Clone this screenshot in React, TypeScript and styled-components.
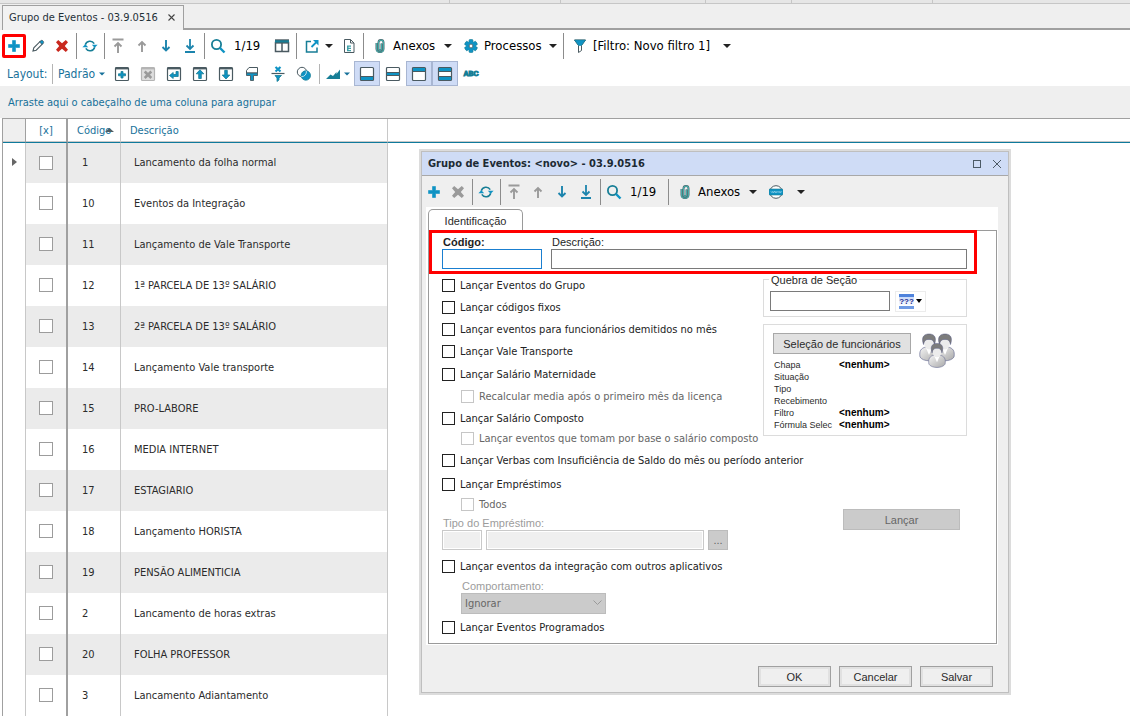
import React, { useState } from "react";
import styled, { createGlobalStyle, css } from "styled-components";

const UI = `"DejaVu Sans Condensed", "DejaVu Sans", Tahoma, sans-serif`;
const SANS = `"Liberation Sans", Arial, sans-serif`;

const BLUE = "#0f93c4";
const TEAL = "#177e96";
const SLATE = "#4a5a61";
const GREY = "#9a9a9a";

const Global = createGlobalStyle`
  *, *::before, *::after { box-sizing: border-box; }
  body { margin: 0; background: #fff; font-family: ${UI}; font-size: 11px; color: #2b2b2b; }
  button, input, select { font: inherit; color: inherit; margin: 0; }
  button { cursor: pointer; }
  svg { flex: none; }
`;

/* ---------- page frame ---------- */

const Page = styled.div`
  display: flex;
  flex-direction: column;
  height: 100vh;
  overflow: hidden;
  position: relative;
`;

const StatusStrip = styled.div`
  display: flex;
  flex: none;
  height: 4px;
  background: #e6e6e6;
  border-bottom: 1px solid #c6c6c6;
`;

const StripCell = styled.span<{ $w: number }>`
  width: ${(p) => p.$w}px;
  border-right: 1px solid #c6c6c6;
`;

const TabBar = styled.div`
  display: flex;
  flex: none;
  height: 26px;
  padding: 1px 0 0 2px;
  background: #efefef;
`;

const DocTab = styled.div`
  display: flex;
  align-items: center;
  justify-content: space-between;
  width: 182px;
  height: 25px;
  padding: 0 8px 2px 6px;
  background: #f2f2f2;
  border: 1px solid #a0a0a0;
  border-bottom: 0;
  color: #1f3038;
  white-space: nowrap;
`;

const TabRule = styled.div`
  flex: 1;
  border-bottom: 2px solid #a0a0a0;
`;

const PlainButton = styled.button`
  display: inline-flex;
  align-items: center;
  justify-content: center;
  padding: 0;
  border: 0;
  background: none;
`;

/* ---------- toolbars ---------- */

const Toolbar = styled.div<{ $h: number }>`
  display: flex;
  flex: none;
  align-items: center;
  height: ${(p) => p.$h}px;
  padding-left: 2px;
`;

const DialogToolbar = styled(Toolbar)`
  padding-left: 0;
`;

const ToolButton = styled(PlainButton)<{ $mark?: boolean }>`
  width: 24px;
  height: 24px;
  flex: none;
  ${(p) =>
    p.$mark &&
    css`
      border: 3px solid #f00;
      border-radius: 2px;
      outline: 0;
    `}
`;

const Separator = styled.span<{ $light?: boolean }>`
  flex: none;
  width: 1px;
  height: ${(p) => (p.$light ? 20 : 26)}px;
  margin: 0 1px 0 2px;
  background: ${(p) => (p.$light ? "#b4b4b4" : "#8c8c8c")};
`;

const MenuButton = styled(PlainButton)<{ $w: number; $tight?: boolean }>`
  flex: none;
  width: ${(p) => p.$w}px;
  height: 24px;
  padding: 0 4px 0 ${(p) => (p.$tight ? 6 : 8)}px;
  justify-content: flex-start;
  gap: ${(p) => (p.$tight ? 4 : 6)}px;
  font-size: 13px;
  color: #000;
  white-space: nowrap;
`;

const Counter = styled.span`
  flex: none;
  width: 40px;
  padding-left: 4px;
  font-size: 13px;
  color: #000;
`;

const LayoutLabel = styled.span`
  flex: none;
  width: 48px;
  padding-left: 5px;
  font-size: 12px;
  color: #17719a;
  white-space: nowrap;
`;

const LayoutMenu = styled(PlainButton)<{ $w: number }>`
  flex: none;
  width: ${(p) => p.$w}px;
  height: 24px;
  padding: 0 4px;
  justify-content: space-between;
  font-size: 12px;
  color: #17719a;
`;

const LayoutButton = styled(PlainButton)<{ $on?: boolean }>`
  flex: none;
  width: 26px;
  height: 25px;
  border: 1px solid ${(p) => (p.$on ? "#a8b6d2" : "transparent")};
  background: ${(p) => (p.$on ? "#cfdcf6" : "transparent")};
`;

const CaretSvg = styled.svg`
  margin-left: auto;
`;

/* ---------- grid ---------- */

const GroupPanel = styled.div`
  flex: none;
  height: 32px;
  padding-left: 8px;
  line-height: 34px;
  background: #efefef;
  color: #17719a;
`;

const GridFrame = styled.div`
  flex: 1;
  min-height: 0;
  overflow: hidden;
  margin-left: 2px;
  border-left: 1px solid #a0a0a0;
  border-top: 1px solid #a0a0a0;
`;

const Table = styled.table`
  width: 100%;
  table-layout: fixed;
  border-collapse: separate;
  border-spacing: 0;
`;

const HeadCell = styled.th<{ $gutter?: boolean; $thick?: boolean; $last?: boolean; $pad?: number }>`
  height: 24px;
  padding: 0 0 0 ${(p) => p.$pad ?? 0}px;
  text-align: ${(p) => (p.$pad ? "left" : "center")};
  font-weight: normal;
  color: #17719a;
  background: ${(p) => (p.$gutter ? "#efefef" : "#fff")};
  border-bottom: 1px solid #0f7a9c;
  border-right: ${(p) =>
    p.$last ? "0" : p.$thick ? "2px solid #a0a0a0" : p.$gutter ? "1px solid #a0a0a0" : "1px solid #c8c8c8"};
  box-shadow: inset 0 -1px 0 #c8c8c8;
  white-space: nowrap;
`;

const SortMark = styled.svg`
  margin-left: -6px;
  vertical-align: 1px;
`;

const BodyCell = styled.td<{ $shade?: boolean; $thick?: boolean; $last?: boolean; $pad?: number }>`
  height: 41px;
  padding: 0 0 1px ${(p) => p.$pad ?? 0}px;
  text-align: ${(p) => (p.$pad ? "left" : "center")};
  vertical-align: middle;
  background: ${(p) => (p.$shade ? "#ebebeb" : "#fff")};
  border-right: ${(p) => (p.$last ? "0" : p.$thick ? "2px solid #a0a0a0" : "1px solid #c8c8c8")};
  white-space: nowrap;
  tr:first-child > & { height: 40px; }
`;

const GridCheck = styled.input`
  appearance: none;
  display: block;
  width: 14px;
  height: 14px;
  margin: 0 auto;
  background: #fff;
  border: 1px solid #9c9c9c;
  &:checked { background: ${BLUE}; }
`;

/* ---------- dialog ---------- */

const DialogFrame = styled.section`
  position: absolute;
  left: 419px;
  top: 149px;
  width: 592px;
  border: 2px solid #dcdcdc;
`;

const DialogBody = styled.div`
  display: flex;
  flex-direction: column;
  border: 1px solid #bfbfbf;
  background: #efefef;
`;

const TitleBar = styled.header`
  display: flex;
  align-items: center;
  height: 24px;
  padding: 0 1px 0 6px;
  background: #cfdcf6;
  border-bottom: 1px solid #a8a8a8;
`;

const Title = styled.h1`
  flex: 1;
  margin: 0;
  font-size: 11px;
  font-weight: bold;
  color: #1c2a33;
`;

const WindowButton = styled(PlainButton)`
  width: 20px;
  height: 20px;
`;

const TabPage = styled.div`
  margin: 0 10px 0 4px;
  padding: 2px 1px 1px 2px;
  background: #fff;
`;

const PageTab = styled.button`
  display: block;
  position: relative;
  width: 95px;
  height: 22px;
  margin-bottom: -1px;
  padding: 0;
  border: 1px solid #9a9a9a;
  border-bottom: 0;
  border-radius: 5px 5px 0 0;
  background: #fff;
  font-family: ${SANS};
`;

const Panel = styled.form`
  border: 1px solid #9a9a9a;
  min-height: 414px;
  font-family: ${SANS};
`;

const KeyFields = styled.div`
  display: flex;
  position: relative;
  gap: 9px;
  margin: -1px 19px 0 0;
  height: 44px;
  padding: 2px 7px 2px 10px;
  border: 3px solid #f00;
`;

const Field = styled.div<{ $w?: number }>`
  display: flex;
  flex-direction: column;
  ${(p) => (p.$w ? `width: ${p.$w}px; flex: none;` : "flex: 1;")}
`;

const FieldLabel = styled.label<{ $bold?: boolean; $off?: boolean }>`
  height: 14px;
  line-height: 14px;
  padding-left: 1px;
  font-family: ${SANS};
  font-size: 11px;
  font-weight: ${(p) => (p.$bold ? "bold" : "normal")};
  color: ${(p) => (p.$off ? "#9c9c9c" : "#1e1e1e")};
`;

const TextBox = styled.input<{ $w?: number }>`
  width: ${(p) => (p.$w ? `${p.$w}px` : "100%")};
  height: 20px;
  padding: 0 3px;
  border: 1px solid #7a7a7a;
  border-radius: 0;
  background: #fff;
  outline: 0;
  &.key { border-color: #1a7fd0; }
  &:disabled { border-color: #c9c9c9; background: #efefef; box-shadow: inset 0 0 0 1px #fff; }
`;

const Columns = styled.div`
  display: flex;
  justify-content: space-between;
  align-items: flex-start;
  padding: 1px 29px 0 13px;
`;

const Options = styled.div`
  flex: 1;
  min-width: 0;
  font-family: ${UI};
`;

const OptionGroup = styled.div<{ $top?: number }>`
  padding-top: ${(p) => p.$top ?? 0}px;
`;

const OptionRow = styled.div<{ $h?: number; $sub?: boolean }>`
  display: flex;
  gap: 5px;
  height: ${(p) => p.$h ?? 22}px;
  padding: 4px 0 0 ${(p) => (p.$sub ? 19 : 0)}px;
  line-height: 14px;
  white-space: nowrap;
  color: ${(p) => (p.$sub ? "#666" : "#222")};
`;

const OptionCheck = styled.input`
  appearance: none;
  flex: none;
  width: 13px;
  height: 13px;
  background: #fff;
  border: 1px solid #222;
  &:disabled { border-color: #c6c6c6; }
  &:checked { background: ${BLUE}; }
`;

const InlineFields = styled.div`
  display: flex;
  gap: 4px;
`;

const Indented = styled.div`
  display: flex;
  flex-direction: column;
  padding: 1px 0 3px 19px;
`;

const SelectWrap = styled.div`
  position: relative;
  width: 145px;
  height: 21px;
`;

const Combo = styled.select`
  appearance: none;
  width: 100%;
  height: 100%;
  padding: 0 3px;
  border: 1px solid #bcbcbc;
  border-radius: 0;
  background: #cbcbcb;
  color: #666;
  opacity: 1;
`;

const Chevron = styled.svg`
  position: absolute;
  right: 4px;
  top: 7px;
  pointer-events: none;
`;

const Side = styled.div`
  width: 204px;
  flex: none;
  padding-top: 4px;
`;

const Fieldset = styled.fieldset`
  display: flex;
  align-items: center;
  position: relative;
  gap: 5px;
  height: 38px;
  min-width: 0;
  margin: 0;
  padding: 6px 6px 0;
  border: 1px solid #dcdcdc;
`;

const FieldsetTitle = styled.legend`
  position: absolute;
  left: 5px;
  top: -6px;
  padding: 0 2px;
  line-height: 12px;
  background: #fff;
  font-size: 11px;
`;

const MaskButton = styled(PlainButton)`
  width: 31px;
  height: 21px;
  gap: 2px;
  border: 1px solid #ececec;
`;

const MaskGlyph = styled.span`
  width: 15px;
  height: 15px;
  line-height: 10px;
  border-top: 3px solid #4f83dc;
  border-bottom: 3px solid #6f9ae4;
  background: linear-gradient(#c9dafa, #fff);
  font-size: 8px;
  font-weight: bold;
  color: #232c8c;
  text-align: center;
`;

const SelectionBox = styled.div`
  height: 112px;
  margin-top: 7px;
  padding: 8px 9px;
  border: 1px solid #dcdcdc;
`;

const SelectionHead = styled.div`
  display: flex;
  align-items: flex-start;
  gap: 8px;
  height: 26px;
`;

const FlatButton = styled.button<{ $w: number }>`
  width: ${(p) => p.$w}px;
  height: 21px;
  padding: 0;
  border: 1px solid #a8a8a8;
  border-radius: 0;
  background: #e1e1e1;
  font-family: ${SANS};
  font-size: 11px;
  white-space: nowrap;
  &:disabled { border-color: #bcbcbc; background: #cbcbcb; color: #666; }
`;

const BrowseButton = styled(FlatButton)`
  height: 20px;
`;

const Facts = styled.dl`
  display: grid;
  grid-template-columns: 65px 1fr;
  grid-auto-rows: 12px;
  margin: 0;
  padding-left: 1px;
  font-size: 9px;
  line-height: 12px;
  white-space: nowrap;
`;

const FactValue = styled.dd`
  margin: 0;
  font-size: 10px;
  font-weight: bold;
  color: #000;
`;

const RunRow = styled.div`
  display: flex;
  justify-content: flex-end;
  margin-top: 73px;
  padding-right: 7px;
`;

const Footer = styled.footer`
  display: flex;
  justify-content: flex-end;
  gap: 8px;
  padding: 21px 15px 5px;
`;

const FooterButton = styled.button`
  width: 73px;
  height: 21px;
  padding: 0;
  border: 1px solid #a0a0a0;
  border-radius: 0;
  background: #efefef;
  box-shadow: inset 0 0 0 2px #e1e1e1;
  font-family: ${SANS};
  font-size: 11px;
`;

/* ---------- icons ---------- */

const Svg = ({ s = 16, children }: { s?: number; children: React.ReactNode }) => (
  <svg width={s} height={s} viewBox={`0 0 ${s} ${s}`} fill="none" aria-hidden="true">
    {children}
  </svg>
);

const Caret = ({ color = "#222", small }: { color?: string; small?: boolean }) => (
  <CaretSvg width={small ? 6 : 8} height="4" viewBox="0 0 8 4" aria-hidden="true">
    <path d="M0 0h8L4 4z" fill={color} />
  </CaretSvg>
);

const PlusIcon = () => (
  <Svg><path d="M6.5 2.5h3v4h4v3h-4v4h-3v-4h-4v-3h4z" fill={BLUE} stroke={BLUE} strokeWidth=".6" /></Svg>
);
const PencilIcon = () => (
  <Svg>
    <path d="M3 13l.8-3.2 6.6-6.6 2.4 2.4-6.6 6.600z" stroke={SLATE} strokeWidth="1.1" fill="#fff" />
    <path d="M9.600 4l1.200-1.200c.6-.6 1.500-.6 2 0l.4.4c.6.6.6 1.400 0 2L12 6.400z" fill={BLUE} stroke={SLATE} strokeWidth=".8" />
  </Svg>
);
const CrossIcon = ({ color = "#c9281e" }: { color?: string }) => (
  <Svg><path d="M2 4.200L4.200 2 8 5.200 11.800 2 14 4.200 10.800 8l3.200 3.800-2.200 2.200L8 10.800 4.200 14 2 11.800 5.200 8z" fill={color} /></Svg>
);
const RefreshIcon = () => (
  <Svg>
    <path d="M3.300 6.800A4.900 4.900 0 0 1 12.200 5.600" stroke={TEAL} strokeWidth="1.600" />
    <path d="M12.700 9.200A4.900 4.900 0 0 1 3.800 10.400" stroke={TEAL} strokeWidth="1.600" />
    <path d="M9.800 6.800h5.800l-2.900 3z" fill={BLUE} />
    <path d="M.4 9.200h5.800l-2.900-3z" fill={BLUE} />
  </Svg>
);
const TopIcon = () => (
  <Svg>
    <path d="M2.500 1.500h11M8 15V5M4.500 8.500L8 5l3.500 3.500" stroke={GREY} strokeWidth="1.900" />
  </Svg>
);
const UpIcon = () => (
  <Svg><path d="M8 14V4M4.500 7.500L8 4l3.500 3.500" stroke={GREY} strokeWidth="1.900" /></Svg>
);
const DownIcon = () => (
  <Svg><path d="M8 2v10.500M4.500 9L8 12.500 11.500 9" stroke="#1c84ad" strokeWidth="1.900" /></Svg>
);
const BottomIcon = () => (
  <Svg><path d="M8 1v10M4.500 7.500L8 11l3.500-3.500M3 14h10" stroke="#1c84ad" strokeWidth="1.800" /></Svg>
);
const SearchIcon = () => (
  <Svg>
    <circle cx="6.500" cy="6.500" r="4.600" stroke={TEAL} strokeWidth="1.800" />
    <path d="M10 10l4.500 4.500" stroke={BLUE} strokeWidth="2.400" />
  </Svg>
);
const ColumnsIcon = () => (
  <Svg>
    <path d="M1.500 4.500h13v9h-13zM8 4.500v9" stroke={SLATE} strokeWidth="1.500" />
    <path d="M1 2h14v3H1z" fill={TEAL} />
    <path d="M1 1.800h14M1 5h14" stroke={SLATE} />
  </Svg>
);
const ExportIcon = () => (
  <Svg>
    <path d="M7 3.500H2.500v10.500h10.500V9.500" stroke={TEAL} strokeWidth="1.500" />
    <path d="M9 2h5.500v5.500z" fill={BLUE} />
    <path d="M7.500 9l5-5" stroke={BLUE} strokeWidth="1.800" />
  </Svg>
);
const DocIcon = () => (
  <Svg>
    <path d="M3.500 1.500h6l3.500 3.500v9.500H3.500z" stroke={SLATE} />
    <path d="M9.500 1.500V5H13" stroke={SLATE} />
    <path d="M6 7.500h4v1.300H7.500v1H10v1.200H7.500v1H10v1.300H6z" fill="#3fa0a8" />
  </Svg>
);
const ClipIcon = () => (
  <Svg s={14}>
    <path d="M3.500 4v6c0 4.200 7 4.200 7 0V3.500c0-3.300-5-3.300-5 0V10c0 1.800 3 1.800 3 0V4.500" stroke={SLATE} strokeWidth="1.900" />
    <path d="M3.500 4v6c0 4.200 7 4.200 7 0V3.500c0-3.300-5-3.300-5 0V10c0 1.800 3 1.800 3 0V4.500" stroke="#45aaa8" strokeWidth="1.200" />
  </Svg>
);
const GearIcon = () => (
  <Svg s={14}>
    {[0, 60, 120].map((a) => (
      <rect key={a} x="5" y=".5" width="4" height="13" rx="1" fill={BLUE} stroke={TEAL} strokeWidth=".6" transform={`rotate(${a} 7 7)`} />
    ))}
    <circle cx="7" cy="7" r="4.600" fill={BLUE} />
    <circle cx="7" cy="7" r="1.900" fill="#fff" stroke={SLATE} strokeWidth=".8" />
  </Svg>
);
const FunnelIcon = () => (
  <Svg s={14}>
    <path d="M1.500 1h11L8.500 6.500v5l-3 2v-7z" fill="#fff" stroke={SLATE} />
    <path d="M1.500 1h11L8.500 6.500h-3z" fill={BLUE} stroke={TEAL} strokeWidth=".6" />
  </Svg>
);
const WebIcon = () => (
  <Svg s={14}>
    <circle cx="7" cy="7" r="6.300" fill="#fff" stroke={SLATE} />
    <rect x="0" y="4" width="14" height="6" rx="1" fill={BLUE} stroke={TEAL} strokeWidth=".6" />
    <path d="M2 6.500l1 1 .8-1 .8 1 .9-1M5.500 6.500l.8 1 .7-1 .8 1 .9-1M9.300 6.500l.8 1 .8-1 .8 1 .9-1" stroke="#d8f1fa" strokeWidth=".7" />
  </Svg>
);

const Box = ({ color = SLATE, fill = "#fff" }: { color?: string; fill?: string }) => (
  <rect x="1.500" y="1.500" width="13" height="13" rx="1" stroke={color} strokeWidth="1.200" fill={fill} />
);
const Lid = ({ color = SLATE }: { color?: string }) => (
  <path d="M1.500 2.500h13" stroke={color} strokeWidth="1.800" />
);
const NewLayoutIcon = () => (
  <Svg><Box /><Lid /><path d="M7 5.500h2v2.300h2.500v2H9V12H7V9.800H4.500v-2H7z" fill={BLUE} stroke={TEAL} strokeWidth=".8" /></Svg>
);
const DelLayoutIcon = () => (
  <Svg><Box color="#b4b4b4" fill="#dedede" /><Lid color="#b4b4b4" /><path d="M4.700 5.500l6.600 6.500M11.300 5.500L4.700 12" stroke={GREY} strokeWidth="2.600" /></Svg>
);
const BackLayoutIcon = () => (
  <Svg><Box /><Lid /><path d="M3.500 9.500l3.700-3v2h2.800V5.500h2.200v5H7.200v2z" fill={BLUE} stroke={TEAL} strokeWidth=".8" /></Svg>
);
const UpLayoutIcon = () => (
  <Svg><Box /><Lid /><path d="M8 3.800l3.800 4H9.300v4.700H6.700V7.800H4.200z" fill={BLUE} stroke={TEAL} strokeWidth=".8" /></Svg>
);
const DownLayoutIcon = () => (
  <Svg><Box /><Lid /><path d="M8 13L4.200 9h2.500V4.300h2.600V9h2.500z" fill={BLUE} stroke={TEAL} strokeWidth=".8" /></Svg>
);
const BrushIcon = () => (
  <Svg>
    <path d="M2.500 7V4.500L5 1.500h8.500V7z" fill="#fff" stroke={SLATE} />
    <path d="M2.500 7h11v2.500H9.500v5h-3v-5h-4z" fill={BLUE} stroke={SLATE} strokeWidth=".9" />
  </Svg>
);
const ClearFormatIcon = () => (
  <Svg>
    <path d="M5.500 1l5 4.500M10.500 1l-5 4.500" stroke={BLUE} strokeWidth="2.200" />
    <path d="M1.500 7.500h13" stroke={SLATE} strokeWidth="1.200" />
    <path d="M5 9.500h6.500L9 12v2l-2 1.500V12z" fill={BLUE} stroke={TEAL} strokeWidth=".8" />
  </Svg>
);
const ShapesIcon = () => (
  <Svg>
    <circle cx="6" cy="6" r="4.700" fill="#fff" stroke={SLATE} />
    <circle cx="9.800" cy="9.500" r="4.700" fill={BLUE} stroke={TEAL} strokeWidth=".8" />
    <path d="M10.300 4.800A4.700 4.700 0 0 1 5.300 10.600" stroke="#cfe8ee" strokeWidth=".9" />
  </Svg>
);
const ChartIcon = () => (
  <Svg><path d="M1 13l4.500-4.500 2.500 1.500 3.500-4v2L15 3.500V13z" fill={TEAL} /></Svg>
);
const PanelBottomIcon = () => (
  <Svg><Box /><path d="M2 11h12v3H2z" fill={BLUE} /><path d="M2 10.500h12" stroke={SLATE} /></Svg>
);
const PanelMiddleIcon = () => (
  <Svg><Box /><path d="M2 6.500h12v3H2z" fill={BLUE} /><path d="M2 6.500h12M2 9.500h12" stroke={SLATE} /></Svg>
);
const PanelTopIcon = () => (
  <Svg><Box /><path d="M2 2h12v3H2z" fill={BLUE} /><path d="M2 5.500h12" stroke={SLATE} /></Svg>
);
const PanelBothIcon = () => (
  <Svg><Box /><path d="M2 2h12v3.500H2zM2 10.500h12V14H2z" fill={BLUE} /><path d="M2 5.500h12M2 10.500h12" stroke={SLATE} /></Svg>
);
const Abc = styled.span`
  font-family: ${SANS};
  font-size: 7px;
  font-weight: 900;
  color: ${TEAL};
  -webkit-text-stroke: 1px ${TEAL};
`;

const Person = ({ x, y, s = 1 }: { x: number; y: number; s?: number }) => (
  <g transform={`translate(${x} ${y}) scale(${s})`}>
    <path d="M-9 19c-1-6 1-9 6-10h6c5 1 7 4 6 10-3 5-15 5-18 0z" fill="url(#coat)" stroke="#6d7196" strokeWidth=".7" />
    <path d="M-3 10l3 7 3-7z" fill="#fff" />
    <ellipse cx="0" cy="5" rx="5" ry="6.500" fill="#ececec" />
    <path d="M-5.500 6.500C-8.500-2.500-3.500-4 0-4s8.500 1.500 5.500 10.500C5 3 3 1 0 1.500-3 1-5 3-5.500 6.500z" fill="#7c7c7c" stroke="#50547f" strokeWidth=".5" />
  </g>
);
const PeopleIcon = () => (
  <svg width="36" height="36" viewBox="0 0 36 36" aria-hidden="true">
    <defs>
      <linearGradient id="coat" x1="0" y1="0" x2="1" y2="1">
        <stop offset="0" stopColor="#f6f6f6" />
        <stop offset="1" stopColor="#a8a8a8" />
      </linearGradient>
    </defs>
    <Person x={10} y={5} />
    <Person x={26} y={5} />
    <Person x={18} y={14} s={0.9} />
  </svg>
);

/* ---------- data ---------- */

const rows: [string, string][] = [
  ["1", "Lancamento da folha normal"],
  ["10", "Eventos da Integração"],
  ["11", "Lançamento de Vale Transporte"],
  ["12", "1ª PARCELA DE 13º SALÁRIO"],
  ["13", "2ª PARCELA DE 13º SALÁRIO"],
  ["14", "Lançamento Vale transporte"],
  ["15", "PRO-LABORE"],
  ["16", "MEDIA INTERNET"],
  ["17", "ESTAGIARIO"],
  ["18", "Lançamento HORISTA"],
  ["19", "PENSÃO ALIMENTICIA"],
  ["2", "Lancamento de horas extras"],
  ["20", "FOLHA PROFESSOR"],
  ["3", "Lancamento Adiantamento"],
];

const facts: [string, string][] = [
  ["Chapa", "<nenhum>"],
  ["Situação", ""],
  ["Tipo", ""],
  ["Recebimento", ""],
  ["Filtro", "<nenhum>"],
  ["Fórmula Selec", "<nenhum>"],
];

/* ---------- parts ---------- */

const Option = ({ id, label, sub, h }: { id: string; label: string; sub?: boolean; h?: number }) => (
  <OptionRow $sub={sub} $h={h}>
    <OptionCheck type="checkbox" id={id} disabled={sub} />
    <label htmlFor={id}>{label}</label>
  </OptionRow>
);

const Navigation = () => (
  <>
    <Separator />
    <ToolButton aria-label="Atualizar"><RefreshIcon /></ToolButton>
    <Separator />
    <ToolButton aria-label="Primeiro"><TopIcon /></ToolButton>
    <ToolButton aria-label="Anterior"><UpIcon /></ToolButton>
    <ToolButton aria-label="Próximo"><DownIcon /></ToolButton>
    <ToolButton aria-label="Último"><BottomIcon /></ToolButton>
    <Separator />
    <ToolButton aria-label="Localizar"><SearchIcon /></ToolButton>
    <Counter>1/19</Counter>
  </>
);

const Grid = () => (
  <GridFrame>
    <Table>
      <colgroup>
        <col width="23" />
        <col width="42" />
        <col width="53" />
        <col width="267" />
        <col />
      </colgroup>
      <thead>
        <tr>
          <HeadCell $gutter />
          <HeadCell $thick>[x]</HeadCell>
          <HeadCell $pad={9}>
            Código
            <SortMark width="9" height="5" viewBox="0 0 9 5" aria-hidden="true">
              <path d="M4.500 0L9 4H0z" fill="#4f5e64" />
            </SortMark>
          </HeadCell>
          <HeadCell $pad={9}>Descrição</HeadCell>
          <HeadCell $last />
        </tr>
      </thead>
      <tbody>
        {rows.map(([code, name], i) => (
          <tr key={code}>
            <BodyCell>
              {i === 0 && (
                <svg width="5" height="8" viewBox="0 0 5 8" aria-hidden="true">
                  <path d="M0 0l5 4-5 4z" fill="#666" />
                </svg>
              )}
            </BodyCell>
            <BodyCell $shade={i % 2 === 0} $thick>
              <GridCheck type="checkbox" aria-label={`Selecionar ${name}`} />
            </BodyCell>
            <BodyCell $shade={i % 2 === 0} $pad={14}>{code}</BodyCell>
            <BodyCell $shade={i % 2 === 0} $pad={13}>{name}</BodyCell>
            <BodyCell $last />
          </tr>
        ))}
      </tbody>
    </Table>
  </GridFrame>
);

const EventDialog = () => {
  const [code, setCode] = useState("");
  const [desc, setDesc] = useState("");
  return (
    <DialogFrame role="dialog" aria-labelledby="dlg-title">
      <DialogBody>
        <TitleBar>
          <Title id="dlg-title">Grupo de Eventos: &lt;novo&gt; - 03.9.0516</Title>
          <WindowButton aria-label="Maximizar">
            <Svg s={10}><rect x="1.500" y="1.500" width="7" height="7" stroke="#4c5a66" /></Svg>
          </WindowButton>
          <WindowButton aria-label="Fechar">
            <Svg s={10}><path d="M1 1l8 8M9 1L1 9" stroke="#4c5a66" /></Svg>
          </WindowButton>
        </TitleBar>

        <DialogToolbar $h={31}>
          <ToolButton aria-label="Novo"><PlusIcon /></ToolButton>
          <ToolButton aria-label="Excluir" disabled><CrossIcon color={GREY} /></ToolButton>
          <Navigation />
          <Separator />
          <MenuButton $w={91}><ClipIcon />Anexos<Caret /></MenuButton>
          <MenuButton $w={48} aria-label="Web"><WebIcon /><Caret /></MenuButton>
        </DialogToolbar>

        <TabPage>
          <PageTab type="button">Identificação</PageTab>
          <Panel onSubmit={(e) => e.preventDefault()}>
            <KeyFields>
              <Field $w={100}>
                <FieldLabel htmlFor="codigo" $bold>Código:</FieldLabel>
                <TextBox id="codigo" className="key" value={code} onChange={(e) => setCode(e.target.value)} />
              </Field>
              <Field>
                <FieldLabel htmlFor="descricao">Descrição:</FieldLabel>
                <TextBox id="descricao" value={desc} onChange={(e) => setDesc(e.target.value)} />
              </Field>
            </KeyFields>

            <Columns>
              <Options>
                <OptionGroup>
                  <Option id="o1" label="Lançar Eventos do Grupo" />
                  <Option id="o2" label="Lançar códigos fixos" />
                  <Option id="o3" label="Lançar eventos para funcionários demitidos no mês" />
                  <Option id="o4" label="Lançar Vale Transporte" />
                </OptionGroup>
                <OptionGroup $top={1}>
                  <Option id="o5" label="Lançar Salário Maternidade" />
                  <Option id="o6" label="Recalcular media após o primeiro mês da licença" sub />
                </OptionGroup>
                <OptionGroup>
                  <Option id="o7" label="Lançar Salário Composto" h={20} />
                  <Option id="o8" label="Lançar eventos que tomam por base o salário composto" sub />
                </OptionGroup>
                <OptionGroup>
                  <Option id="o9" label="Lançar Verbas com Insuficiência de Saldo do mês ou período anterior" />
                </OptionGroup>
                <OptionGroup $top={2}>
                  <Option id="o10" label="Lançar Empréstimos" h={20} />
                  <Option id="o11" label="Todos" sub />
                </OptionGroup>
                <Field>
                  <FieldLabel htmlFor="tipo" $off>Tipo do Empréstimo:</FieldLabel>
                  <InlineFields>
                    <TextBox id="tipo" $w={40} disabled />
                    <TextBox aria-label="Descrição do tipo" $w={218} disabled />
                    <BrowseButton type="button" $w={20} disabled>...</BrowseButton>
                  </InlineFields>
                </Field>
                <OptionGroup $top={6}>
                  <Option id="o12" label="Lançar eventos da integração com outros aplicativos" />
                </OptionGroup>
                <Indented>
                  <FieldLabel htmlFor="comp" $off>Comportamento:</FieldLabel>
                  <SelectWrap>
                    <Combo id="comp" disabled defaultValue="Ignorar">
                      <option>Ignorar</option>
                    </Combo>
                    <Chevron width="9" height="6" viewBox="0 0 9 6" fill="none" aria-hidden="true">
                      <path d="M.5.5l4 4 4-4" stroke="#9a9a9a" />
                    </Chevron>
                  </SelectWrap>
                </Indented>
                <Option id="o13" label="Lançar Eventos Programados" />
              </Options>

              <Side>
                <Fieldset>
                  <FieldsetTitle>Quebra de Seção</FieldsetTitle>
                  <TextBox $w={120} aria-label="Quebra de Seção" />
                  <MaskButton type="button" aria-label="Máscara">
                    <MaskGlyph>???</MaskGlyph>
                    <svg width="6" height="4" viewBox="0 0 6 4" aria-hidden="true"><path d="M0 0h6L3 4z" fill="#000" /></svg>
                  </MaskButton>
                </Fieldset>
                <SelectionBox>
                  <SelectionHead>
                    <FlatButton type="button" $w={138}>Seleção de funcionários</FlatButton>
                    <PeopleIcon />
                  </SelectionHead>
                  <Facts>
                    {facts.map(([k, v]) => (
                      <React.Fragment key={k}>
                        <dt>{k}</dt>
                        <FactValue>{v}</FactValue>
                      </React.Fragment>
                    ))}
                  </Facts>
                </SelectionBox>
                <RunRow>
                  <FlatButton type="button" $w={117} disabled>Lançar</FlatButton>
                </RunRow>
              </Side>
            </Columns>
          </Panel>
        </TabPage>

        <Footer>
          <FooterButton>OK</FooterButton>
          <FooterButton>Cancelar</FooterButton>
          <FooterButton>Salvar</FooterButton>
        </Footer>
      </DialogBody>
    </DialogFrame>
  );
};

export default function App() {
  return (
    <Page>
      <Global />
      <StatusStrip>
        {[450, 111, 145, 86, 141].map((w, i) => (
          <StripCell key={i} $w={w} />
        ))}
      </StatusStrip>
      <TabBar>
        <DocTab>
          Grupo de Eventos - 03.9.0516
          <PlainButton aria-label="Fechar aba">
            <Svg s={7}><path d="M.5.5l6 6M6.500.5l-6 6" stroke="#444" strokeWidth="1.100" /></Svg>
          </PlainButton>
        </DocTab>
        <TabRule />
      </TabBar>

      <Toolbar $h={31}>
        <ToolButton $mark aria-label="Novo"><PlusIcon /></ToolButton>
        <ToolButton aria-label="Editar"><PencilIcon /></ToolButton>
        <ToolButton aria-label="Excluir"><CrossIcon /></ToolButton>
        <Navigation />
        <ToolButton aria-label="Colunas"><ColumnsIcon /></ToolButton>
        <Separator />
        <MenuButton $w={39} $tight aria-label="Exportar"><ExportIcon /><Caret /></MenuButton>
        <ToolButton aria-label="Relatório"><DocIcon /></ToolButton>
        <Separator />
        <MenuButton $w={91}><ClipIcon />Anexos<Caret /></MenuButton>
        <MenuButton $w={105}><GearIcon />Processos<Caret /></MenuButton>
        <Separator />
        <MenuButton $w={170}><FunnelIcon />[Filtro: Novo filtro 1]<Caret /></MenuButton>
      </Toolbar>

      <Toolbar $h={25}>
        <LayoutLabel>Layout:</LayoutLabel>
        <Separator $light />
        <LayoutMenu $w={55}>Padrão<Caret small color="#17719a" /></LayoutMenu>
        <LayoutButton aria-label="Novo layout"><NewLayoutIcon /></LayoutButton>
        <LayoutButton aria-label="Excluir layout"><DelLayoutIcon /></LayoutButton>
        <LayoutButton aria-label="Restaurar layout"><BackLayoutIcon /></LayoutButton>
        <LayoutButton aria-label="Exportar layout"><UpLayoutIcon /></LayoutButton>
        <LayoutButton aria-label="Importar layout"><DownLayoutIcon /></LayoutButton>
        <LayoutButton aria-label="Formatar"><BrushIcon /></LayoutButton>
        <LayoutButton aria-label="Limpar formato"><ClearFormatIcon /></LayoutButton>
        <LayoutButton aria-label="Formas"><ShapesIcon /></LayoutButton>
        <Separator $light />
        <LayoutMenu $w={33} aria-label="Gráfico"><ChartIcon /><Caret small color="#17719a" /></LayoutMenu>
        <LayoutButton $on aria-label="Rodapé"><PanelBottomIcon /></LayoutButton>
        <LayoutButton aria-label="Rodapé de grupo"><PanelMiddleIcon /></LayoutButton>
        <LayoutButton $on aria-label="Agrupamento"><PanelTopIcon /></LayoutButton>
        <LayoutButton $on aria-label="Linhas alternadas"><PanelBothIcon /></LayoutButton>
        <LayoutButton aria-label="Texto"><Abc>ABC</Abc></LayoutButton>
      </Toolbar>

      <GroupPanel>Arraste aqui o cabeçalho de uma coluna para agrupar</GroupPanel>
      <Grid />
      <EventDialog />
    </Page>
  );
}
